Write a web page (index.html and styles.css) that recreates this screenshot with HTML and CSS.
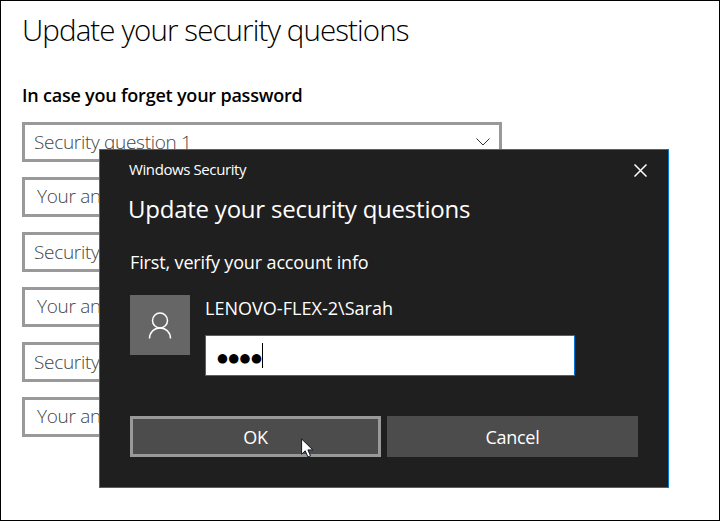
FILE: index.html
```html
<!DOCTYPE html>
<html lang="en">
<head>
    <meta charset="UTF-8">
    <meta name="viewport" content="width=device-width, initial-scale=1.0">
    <title>Update your security questions</title>
    <link rel="stylesheet" href="styles.css">
</head>
<body>
    <main class="page">
        <h1><span>Update your security questions</span></h1>
        <h2><span>In case you forget your password</span></h2>

        <div class="question-list">
            <div class="field select">
                <span>Security question 1</span>
                <svg class="chevron" width="14" height="8" viewBox="0 0 14 8">
                    <path d="M0.5 0.5 L7 7 L13.5 0.5" fill="none" stroke="#333" stroke-width="1"/>
                </svg>
            </div>
            <div class="field answer"><span>Your answer</span></div>
            <div class="field select"><span>Security</span></div>
            <div class="field answer"><span>Your answer</span></div>
            <div class="field select"><span>Security</span></div>
            <div class="field answer"><span>Your answer</span></div>
        </div>
    </main>

    <div class="dialog">
        <div class="dialog-bar">
            <span class="dialog-caption">Windows Security</span>
            <svg class="close" width="13" height="13" viewBox="0 0 13 13">
                <path d="M0.5 0.5 L12.5 12.5 M12.5 0.5 L0.5 12.5" fill="none" stroke="#fff" stroke-width="1.5"/>
            </svg>
        </div>
        <div class="dialog-title"><span>Update your security questions</span></div>
        <div class="dialog-text"><span>First, verify your account info</span></div>

        <div class="account">
            <div class="avatar">
                <svg width="24" height="28" viewBox="0 0 24 28">
                    <circle cx="12" cy="9.5" r="7.5" fill="none" stroke="#fff" stroke-width="1.5"/>
                    <path d="M1.5 27.5 C1.5 21.5 6 17 12 17 C18 17 22.5 21.5 22.5 27.5" fill="none" stroke="#fff" stroke-width="1.5"/>
                </svg>
            </div>
            <div class="account-info">
                <div class="account-name"><span>LENOVO-FLEX-2\Sarah</span></div>
                <div class="password">
                    <span class="dots">●●●●</span>
                    <span class="caret"></span>
                </div>
            </div>
        </div>

        <div class="buttons">
            <div class="button focused"><span class="ok">OK</span></div>
            <div class="button"><span class="cancel">Cancel</span></div>
        </div>

        <svg class="cursor" width="13" height="20" viewBox="0 0 13 20">
            <path d="M0.6 0.9 L0.6 16.2 L4.2 12.8 L6.9 18.9 L9.5 17.8 L6.9 11.9 L11.8 11.9 Z" fill="#fff" stroke="#111827" stroke-width="1"/>
        </svg>
    </div>
</body>
</html>
```
FILE: styles.css
```css
* {
    margin: 0;
    padding: 0;
    box-sizing: border-box;
}

body {
    font-family: 'Open Sans', 'Noto Sans', sans-serif;
    background-color: #fff;
    color: #000;
    white-space: nowrap;
}

.page {
    height: 521px;
    border: 1px solid #000;
    padding: 9px 21px 0;
    overflow: hidden;
}

h1 {
    height: 40px;
    line-height: 40px;
    font-size: 29.5px;
    font-weight: 300;
    letter-spacing: -0.9px;
}

h2 {
    height: 24px;
    line-height: 24px;
    margin-top: 33px;
    font-size: 18px;
    font-weight: 600;
    letter-spacing: -0.21px;
}

.question-list {
    display: flex;
    flex-direction: column;
    gap: 15px;
    width: 480px;
    margin-top: 15px;
}

.field {
    display: flex;
    align-items: center;
    height: 40px;
    border: 3px solid #999;
    color: #444;
    font-size: 19px;
    font-weight: 300;
    letter-spacing: -0.3px;
}

.select {
    justify-content: space-between;
    padding: 0 9px 0 9px;
}

.answer {
    padding: 0 0 2px 12px;
}

.dialog {
    position: absolute;
    left: 99px;
    top: 149px;
    width: 570px;
    height: 339px;
    padding: 0 30px;
    background-color: #1f1f1f;
    border: 1px solid #0078d7;
    color: #fff;
}

.dialog-bar {
    display: flex;
    justify-content: space-between;
    align-items: center;
    height: 41px;
    padding-right: 21px;
    margin: 0 -30px 0 -1px;
    font-size: 15px;
    letter-spacing: -0.4px;
}

.dialog-caption {
    padding-bottom: 3px;
}

.dialog-title {
    height: 36px;
    line-height: 36px;
    margin-left: -2px;
    font-size: 24px;
    letter-spacing: -0.23px;
}

.dialog-text {
    height: 26px;
    line-height: 26px;
    margin-top: 22px;
    font-size: 18px;
    letter-spacing: -0.14px;
}

.account {
    display: flex;
    gap: 15px;
    margin-top: 20px;
}

.avatar {
    display: flex;
    align-items: center;
    justify-content: center;
    width: 60px;
    height: 60px;
    background-color: #666;
}

.account-name {
    height: 26px;
    line-height: 26px;
    font-size: 18px;
    letter-spacing: 0.03px;
}

.password {
    display: flex;
    align-items: center;
    width: 370px;
    height: 41px;
    margin-top: 14px;
    padding-left: 11px;
    background-color: #fff;
    border: 1px solid #0078d7;
    color: #000;
}

.dots {
    padding-top: 4px;
    font-family: 'DejaVu Sans', sans-serif;
    font-size: 12.5px;
    letter-spacing: 0.4px;
}

.caret {
    width: 1px;
    height: 25px;
    background-color: #000;
}

.buttons {
    display: flex;
    gap: 6px;
    margin-top: 40px;
}

.button {
    display: flex;
    align-items: center;
    justify-content: center;
    width: 251px;
    height: 41px;
    background-color: #4c4c4c;
    font-size: 18px;
    letter-spacing: -0.3px;
}

.button.focused {
    border: 3px solid #999;
}

.cursor {
    position: absolute;
    left: 201px;
    top: 288px;
}
```
